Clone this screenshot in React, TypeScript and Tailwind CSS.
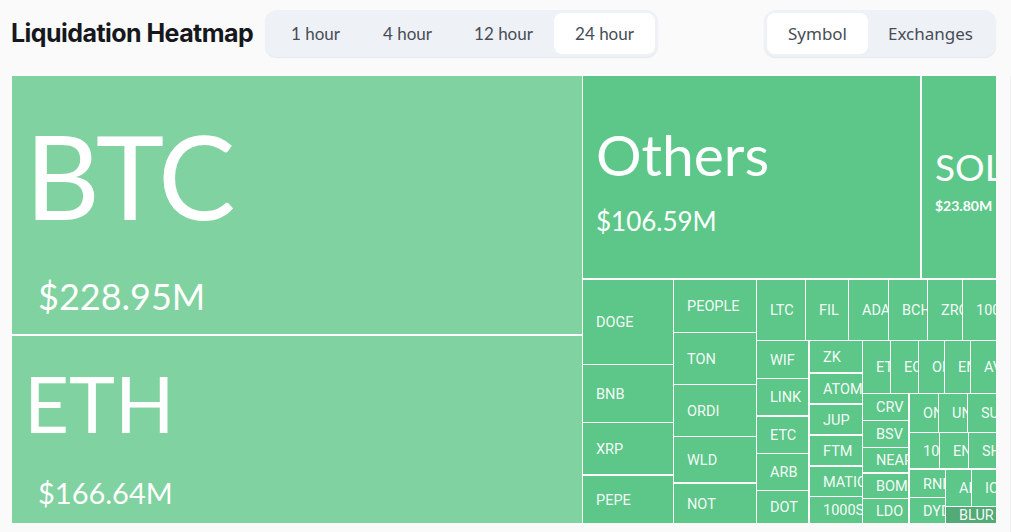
type Cell = {
  name: string;
  x: number;
  y: number;
  r: number;
  b: number;
  dark?: boolean;
};

const cells: Cell[] = [
  { name: 'DOGE', x: 583, y: 280, r: 673, b: 364 },
  { name: 'BNB', x: 583, y: 365, r: 673, b: 422 },
  { name: 'XRP', x: 583, y: 423, r: 673, b: 474 },
  { name: 'PEPE', x: 583, y: 476, r: 673, b: 523 },
  { name: 'PEOPLE', x: 674, y: 280, r: 756, b: 332 },
  { name: 'TON', x: 674, y: 333, r: 756, b: 384 },
  { name: 'ORDI', x: 674, y: 385, r: 756, b: 436 },
  { name: 'WLD', x: 674, y: 437, r: 756, b: 482 },
  { name: 'NOT', x: 674, y: 484, r: 756, b: 523 },
  { name: 'LTC', x: 757, y: 280, r: 805, b: 340 },
  { name: 'FIL', x: 806, y: 280, r: 848, b: 340 },
  { name: 'ADA', x: 849, y: 280, r: 888, b: 340 },
  { name: 'BCH', x: 889, y: 280, r: 927, b: 340 },
  { name: 'ZRO', x: 928, y: 280, r: 962, b: 340 },
  { name: '1000', x: 963, y: 280, r: 996, b: 340 },
  { name: 'WIF', x: 757, y: 341, r: 808, b: 378 },
  { name: 'LINK', x: 757, y: 379, r: 808, b: 415 },
  { name: 'ETC', x: 757, y: 417, r: 808, b: 453 },
  { name: 'ARB', x: 757, y: 454, r: 808, b: 490 },
  { name: 'DOT', x: 757, y: 491, r: 808, b: 523 },
  { name: 'ZK', x: 810, y: 341, r: 862, b: 372 },
  { name: 'ATOM', x: 810, y: 374, r: 862, b: 403 },
  { name: 'JUP', x: 810, y: 405, r: 862, b: 434 },
  { name: 'FTM', x: 810, y: 436, r: 862, b: 465 },
  { name: 'MATIC', x: 810, y: 467, r: 862, b: 496 },
  { name: '1000S', x: 810, y: 497, r: 862, b: 523 },
  { name: 'ETH', x: 863, y: 341, r: 890, b: 393 },
  { name: 'EOS', x: 891, y: 341, r: 918, b: 393 },
  { name: 'OP', x: 919, y: 341, r: 944, b: 393 },
  { name: 'ENS', x: 945, y: 341, r: 970, b: 393 },
  { name: 'AVAX', x: 971, y: 341, r: 996, b: 393 },
  { name: 'CRV', x: 863, y: 394, r: 908, b: 420 },
  { name: 'BSV', x: 863, y: 421, r: 908, b: 447 },
  { name: 'NEAR', x: 863, y: 448, r: 908, b: 472 },
  { name: 'BOME', x: 863, y: 474, r: 908, b: 498 },
  { name: 'LDO', x: 863, y: 499, r: 908, b: 523 },
  { name: 'ONDO', x: 910, y: 394, r: 938, b: 432 },
  { name: 'UNI', x: 939, y: 394, r: 967, b: 432 },
  { name: 'SUI', x: 968, y: 394, r: 996, b: 432 },
  { name: '10', x: 910, y: 433, r: 939, b: 468 },
  { name: 'ENA', x: 940, y: 433, r: 968, b: 468 },
  { name: 'SHIB', x: 969, y: 433, r: 996, b: 468 },
  { name: 'RNDR', x: 910, y: 470, r: 945, b: 497 },
  { name: 'DYDX', x: 910, y: 498, r: 945, b: 523 },
  { name: 'AR', x: 946, y: 470, r: 971, b: 506 },
  { name: 'ICP', x: 972, y: 470, r: 996, b: 506 },
  { name: 'BLUR', x: 946, y: 507, r: 996, b: 523, dark: true },
];

const ranges = [
  { label: '1 hour', width: 'w-[93px]' },
  { label: '4 hour', width: 'w-[91px]' },
  { label: '12 hour', width: 'w-[101px]' },
  { label: '24 hour', width: 'w-[101px]' },
];

function BigCell({ x, y, r, b, light, name, value, pad, nameClass, valueClass }: {
  x: number;
  y: number;
  r: number;
  b: number;
  light?: boolean;
  name: string;
  value: string;
  pad: string;
  nameClass: string;
  valueClass: string;
}) {
  return (
    <div
      className={`absolute overflow-hidden text-white ${pad} ${light ? 'bg-[#80d2a0]' : 'bg-[#5dc789]'}`}
      style={{ left: x - 12, top: y - 76, width: r - x, height: b - y }}
    >
      <div className={`font-['Lato',sans-serif] leading-none whitespace-nowrap ${nameClass}`}>{name}</div>
      <div className={`font-['Lato',sans-serif] leading-none whitespace-nowrap ${valueClass}`}>{value}</div>
    </div>
  );
}

export default function App() {
  return (
    <div className="flex w-[1011px] h-[532px] bg-[#fafafa] overflow-hidden">
      <div className="w-[1010px] pl-3 pr-[14px] pt-[10px]">
        {/* Header */}
        <div className="flex items-center h-[47px]">
          <h1 className="font-['Inter',sans-serif] font-bold text-[25px] tracking-[-0.55px] text-[#16181d] whitespace-nowrap w-[253px] -ml-px">
            Liquidation Heatmap
          </h1>
          <div className="flex h-[47px] w-[393px] ml-px pl-1 pr-[3px] py-[3px] rounded-xl bg-[#eef1f5] shadow-[0_1px_1px_#e3e6ea]">
            {ranges.map((r) => (
              <button
                key={r.label}
                className={`rounded-lg font-['Lato',sans-serif] text-[17px] text-[#474d57] whitespace-nowrap ${r.width} ${
                  r.label === '24 hour' ? 'bg-white' : ''
                }`}
              >
                {r.label}
              </button>
            ))}
          </div>
          <div className="flex h-[47px] w-[232px] ml-auto p-[3px] rounded-xl bg-[#eef1f5] shadow-[0_1px_1px_#e3e6ea]">
            <button className="w-[101px] rounded-lg bg-white font-['Noto_Sans',sans-serif] text-[17px] text-[#474d57]">Symbol</button>
            <button className="w-[125px] font-['Noto_Sans',sans-serif] text-[17px] text-[#474d57]">Exchanges</button>
          </div>
        </div>

        {/* Treemap */}
        <div className="relative w-[984px] h-[447px] mt-[19px] bg-white">
          <BigCell
            x={12} y={76} r={582} b={334} light name="BTC" value="$228.95M" pad="pl-[13px] pt-[42px]"
            nameClass="text-[116px] tracking-[-2.5px]" valueClass="text-[36px] pl-[13px] mt-[44px]"
          />
          <BigCell
            x={12} y={336} r={582} b={523} light name="ETH" value="$166.64M" pad="pl-[12px] pt-[28px]"
            nameClass="text-[78px]" valueClass="text-[29px] pl-[14px] mt-[36px]"
          />
          <BigCell
            x={583} y={76} r={920} b={278} name="Others" value="$106.59M" pad="pl-[13px] pt-[50px]"
            nameClass="text-[57px]" valueClass="text-[26px] mt-[25px]"
          />
          <BigCell
            x={922} y={76} r={996} b={278} name="SOL" value="$23.80M" pad="pl-[13px] pt-[72px]"
            nameClass="text-[37px]" valueClass="text-[14px] font-bold mt-[14px]"
          />
          {cells.map((c) => (
            <div
              key={c.name}
              className={`absolute flex items-center overflow-hidden pl-[13px] pt-[3px] font-['Roboto',sans-serif] text-[14.5px] leading-none whitespace-nowrap text-white/95 ${
                c.dark ? 'bg-[#52ab76]' : 'bg-[#5dc789]'
              }`}
              style={{ left: c.x - 12, top: c.y - 76, width: c.r - c.x, height: c.b - c.y }}
            >
              {c.name}
            </div>
          ))}
        </div>
      </div>
      {/* edge of the next panel */}
      <div className="w-px h-[456px] mt-[76px] bg-[#eeeeee]" />
    </div>
  );
}
